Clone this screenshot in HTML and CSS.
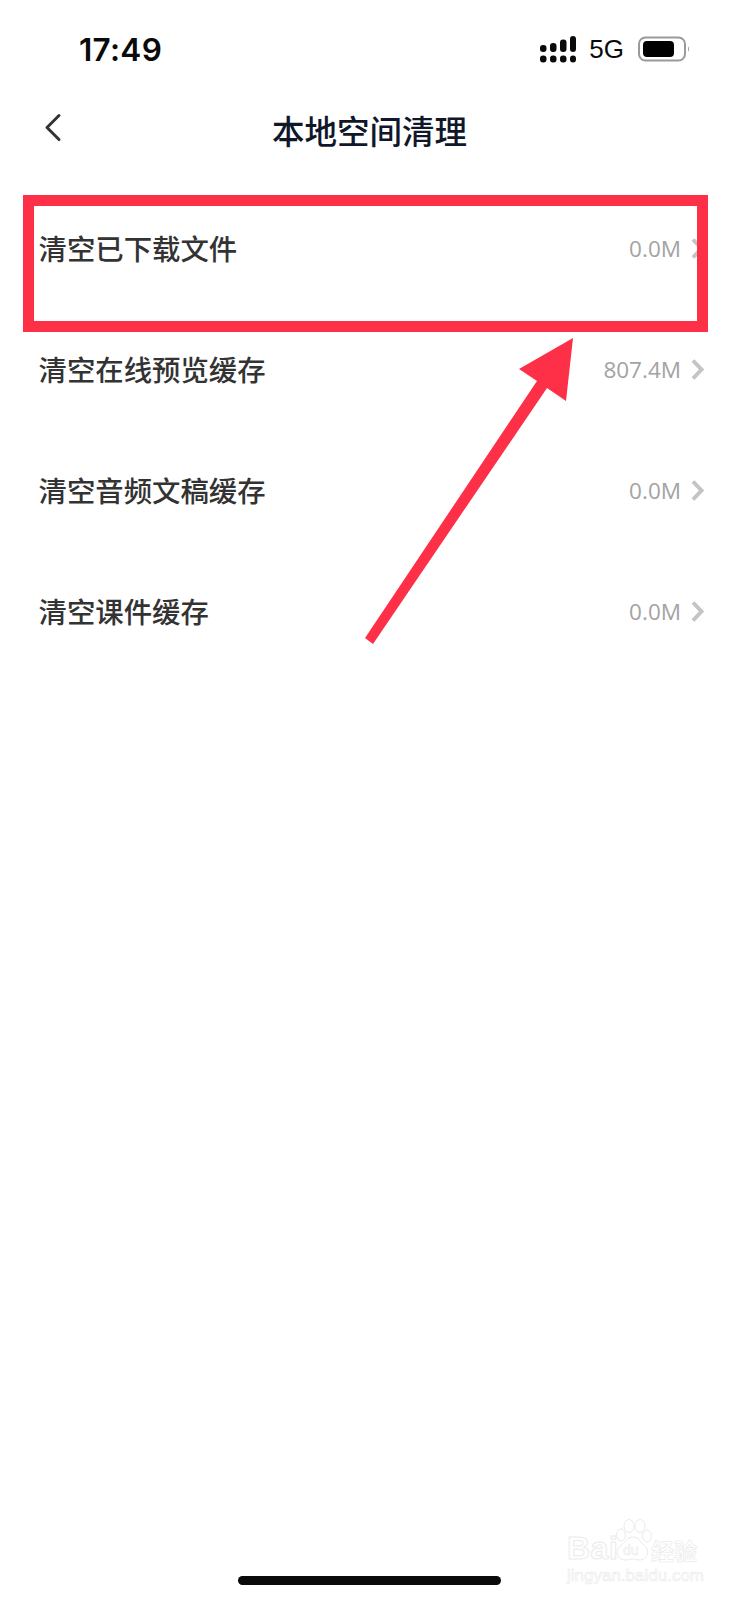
FILE: index.html
```html
<!DOCTYPE html>
<html lang="zh-CN">
<head>
<meta charset="utf-8">
<title>本地空间清理</title>
<link rel="stylesheet" href="styles.css">
</head>
<body>
<div class="page">
  <header class="status-bar">
    <span class="clock">17:49</span>
    <div class="status-icons">
      <svg class="signal" width="36" height="27" viewBox="0 0 36 27" aria-hidden="true">
        <rect x="0" y="9" width="6.5" height="7" rx="3"/><rect x="0" y="19.500" width="6.5" height="7" rx="3"/>
        <rect x="10" y="7" width="6.5" height="9" rx="3"/><rect x="10" y="19.500" width="6.5" height="7" rx="3"/>
        <rect x="20" y="3.500" width="6.500" height="12.500" rx="3"/><rect x="20" y="19.500" width="6.5" height="7" rx="3"/>
        <rect x="30" y="0" width="6" height="16" rx="3"/><rect x="30" y="19.500" width="6" height="7" rx="3"/>
      </svg>
      <span class="network">5G</span>
      <svg class="battery" width="52" height="26" viewBox="0 0 52 26" aria-hidden="true">
        <rect x="1" y="1.500" width="46" height="23" rx="6.500" class="battery-shell"/>
        <rect x="5" y="5" width="31" height="16" rx="4"/>
        <path d="M50 10.500c1.300.6 1.300 4.400 0 5z" class="battery-tip"/>
      </svg>
    </div>
  </header>

  <nav class="nav-bar">
    <svg class="back" width="18" height="29" viewBox="0 0 18 29" aria-hidden="true">
      <path d="M15 2.500 3 14.500l12 12"/>
    </svg>
    <h1 class="title">本地空间清理</h1>
  </nav>

  <ul class="list">
    <li class="row">
      <span class="label">清空已下载文件</span>
      <span class="size">0.0M</span>
      <svg class="chevron" width="13" height="21" viewBox="0 0 13 21" aria-hidden="true"><path d="M2 1.500 10.500 10.500 2 19.500"/></svg>
    </li>
    <li class="row">
      <span class="label">清空在线预览缓存</span>
      <span class="size">807.4M</span>
      <svg class="chevron" width="13" height="21" viewBox="0 0 13 21" aria-hidden="true"><path d="M2 1.500 10.500 10.500 2 19.500"/></svg>
    </li>
    <li class="row">
      <span class="label">清空音频文稿缓存</span>
      <span class="size">0.0M</span>
      <svg class="chevron" width="13" height="21" viewBox="0 0 13 21" aria-hidden="true"><path d="M2 1.500 10.500 10.500 2 19.500"/></svg>
    </li>
    <li class="row">
      <span class="label">清空课件缓存</span>
      <span class="size">0.0M</span>
      <svg class="chevron" width="13" height="21" viewBox="0 0 13 21" aria-hidden="true"><path d="M2 1.500 10.500 10.500 2 19.500"/></svg>
    </li>
  </ul>

  <div class="home-indicator"></div>

  <!-- annotation layer: highlight frame and pointer -->
  <div class="highlight"></div>
  <svg class="pointer" width="739" height="700" viewBox="0 0 739 700" aria-hidden="true">
    <polygon points="573,338 519,369 537,381 365,638 373,644 547,388 566,401"/>
  </svg>

  <!-- site watermark -->
  <div class="watermark">
    <div class="mark-top">
      <span class="mark-word">Bai</span>
      <svg class="paw" width="40" height="44" viewBox="0 0 40 44" aria-hidden="true">
        <ellipse cx="9" cy="16" rx="4.500" ry="6"/>
        <ellipse cx="17" cy="7" rx="5" ry="6.500"/>
        <ellipse cx="28" cy="7" rx="5" ry="6.500"/>
        <ellipse cx="35" cy="17" rx="4.500" ry="6"/>
        <path d="M21 18c6 0 8 6 12 9 5 4 3 14-5 14-3 0-5-1-7-1s-5 1-8 1c-8 0-10-9-5-14 5-3 7-9 13-9z"/>
      </svg>
      <span class="mark-du">du</span>
      <span class="mark-cn">经验</span>
    </div>
    <div class="mark-url">jingyan.baidu.com</div>
  </div>
</div>
</body>
</html>
```

FILE: styles.css
```css
* {
  box-sizing: border-box;
}

html,
body {
  margin: 0;
  padding: 0;
  background: #fff;
}

.page {
  position: relative;
  display: flex;
  flex-direction: column;
  width: 739px;
  height: 1600px;
  overflow: hidden;
  font-family: "Noto Sans CJK SC", "Noto Sans", sans-serif;
}

/* status bar */
.status-bar {
  display: flex;
  align-items: center;
  justify-content: space-between;
  height: 98px;
  padding: 0 49px 0 79px;
}

.clock {
  font-family: Inter, "Liberation Sans", sans-serif;
  font-size: 31.500px;
  font-weight: 600;
  letter-spacing: 0.3px;
  color: #0a0a0a;
}

.status-icons {
  display: flex;
  align-items: center;
}

.signal {
  fill: #0a0a0a;
}

.network {
  margin-left: 13px;
  font-family: "Liberation Sans", Arial, sans-serif;
  font-size: 26px;
  line-height: 1;
  color: #0a0a0a;
}

.battery {
  margin-left: 14px;
}

.battery-shell {
  fill: #fff;
  stroke: #9a9a9a;
  stroke-width: 2;
}

.battery-tip {
  fill: #9a9a9a;
}

/* navigation bar */
.nav-bar {
  position: relative;
  display: flex;
  align-items: center;
  justify-content: center;
  height: 70px;
  padding-bottom: 8px;
}

.back {
  position: absolute;
  top: 15px;
  left: 44px;
  fill: none;
  stroke: #333;
  stroke-width: 3;
  stroke-linecap: round;
  stroke-linejoin: round;
}

.title {
  margin: 0;
  font-size: 32.500px;
  font-weight: 500;
  line-height: 1.2;
  color: #10172a;
}

/* storage rows */
.list {
  margin: 20px 0 0;
  padding: 0 35px 0 38.500px;
  list-style: none;
}

.row {
  display: flex;
  align-items: center;
  height: 121px;
}

.label {
  flex: 1;
  font-size: 28.400px;
  font-weight: 500;
  line-height: 1.2;
  color: #333;
}

.size {
  font-family: "Open Sans", Roboto, sans-serif;
  font-size: 22.500px;
  font-weight: 400;
  color: #a3a3a3;
}

.chevron {
  margin-left: 10px;
  fill: none;
  stroke: #c4c4c4;
  stroke-width: 4;
}

/* gesture bar */
.home-indicator {
  width: 263px;
  height: 9px;
  margin: auto auto 15px;
  border-radius: 5px;
  background: #0a0a0a;
}

/* annotation layer */
.highlight {
  position: absolute;
  top: 195px;
  left: 22.500px;
  width: 685px;
  height: 137px;
  border: 11px solid #fd3047;
}

.pointer {
  position: absolute;
  top: 0;
  left: 0;
  fill: #fd3047;
}

/* watermark */
.watermark {
  position: absolute;
  top: 1519px;
  left: 567px;
  width: 135px;
  color: #fff;
  -webkit-text-stroke: 1px #ebebeb;
}

.mark-top {
  position: relative;
  display: flex;
  align-items: flex-end;
  height: 45px;
}

.mark-word {
  font-family: "Liberation Sans", Arial, sans-serif;
  font-size: 32px;
  font-weight: 700;
  line-height: 32px;
  letter-spacing: 0.5px;
}

.paw {
  position: absolute;
  top: 0;
  left: 45px;
  fill: #fff;
  stroke: #ebebeb;
  stroke-width: 1;
}

.mark-du {
  position: absolute;
  top: 24px;
  left: 56px;
  font-family: "Liberation Sans", Arial, sans-serif;
  font-size: 14px;
  line-height: 1;
  -webkit-text-stroke: 0.6px #ebebeb;
}

.mark-cn {
  position: absolute;
  top: 19px;
  left: 84px;
  font-size: 23px;
  font-weight: 700;
  line-height: 1.1;
  -webkit-text-stroke: 0.7px #ebebeb;
}

.mark-url {
  margin-top: 3px;
  font-family: "Liberation Sans", Arial, sans-serif;
  font-size: 17px;
  line-height: 1.1;
  white-space: nowrap;
  -webkit-text-stroke: 0.6px #ebebeb;
}
```
